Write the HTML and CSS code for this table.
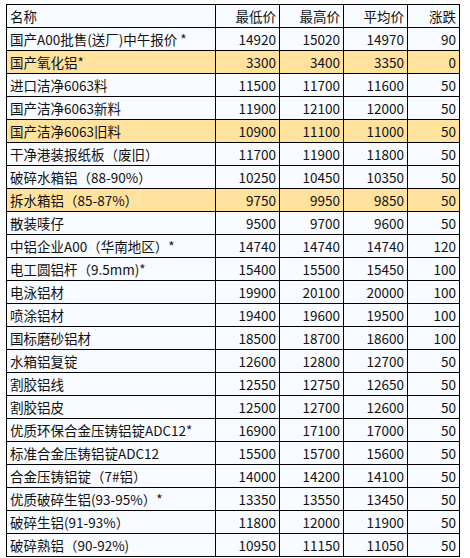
FILE: index.html
```html
<!DOCTYPE html>
<html lang="zh">
<head>
<meta charset="utf-8">
<link rel="stylesheet" href="styles.css">
</head>
<body>
<table class="price">
<colgroup><col class="c-name"><col class="c-num"><col class="c-num"><col class="c-num"><col class="c-chg"></colgroup>
<tr><td>名称</td><td class="n">最低价</td><td class="n">最高价</td><td class="n">平均价</td><td class="n">涨跌</td></tr>
<tr><td>国产A00批售(送厂)中午报价 *</td><td class="n">14920</td><td class="n">15020</td><td class="n">14970</td><td class="n">90</td></tr>
<tr class="hl"><td>国产氧化铝*</td><td class="n">3300</td><td class="n">3400</td><td class="n">3350</td><td class="n">0</td></tr>
<tr><td>进口洁净6063料</td><td class="n">11500</td><td class="n">11700</td><td class="n">11600</td><td class="n">50</td></tr>
<tr><td>国产洁净6063新料</td><td class="n">11900</td><td class="n">12100</td><td class="n">12000</td><td class="n">50</td></tr>
<tr class="hl"><td>国产洁净6063旧料</td><td class="n">10900</td><td class="n">11100</td><td class="n">11000</td><td class="n">50</td></tr>
<tr><td>干净港装报纸板（废旧）</td><td class="n">11700</td><td class="n">11900</td><td class="n">11800</td><td class="n">50</td></tr>
<tr><td>破碎水箱铝（88-90%）</td><td class="n">10250</td><td class="n">10450</td><td class="n">10350</td><td class="n">50</td></tr>
<tr class="hl"><td>拆水箱铝（85-87%）</td><td class="n">9750</td><td class="n">9950</td><td class="n">9850</td><td class="n">50</td></tr>
<tr><td>散装唛仔</td><td class="n">9500</td><td class="n">9700</td><td class="n">9600</td><td class="n">50</td></tr>
<tr><td>中铝企业A00（华南地区）*</td><td class="n">14740</td><td class="n">14740</td><td class="n">14740</td><td class="n">120</td></tr>
<tr><td>电工圆铝杆（9.5mm)*</td><td class="n">15400</td><td class="n">15500</td><td class="n">15450</td><td class="n">100</td></tr>
<tr><td>电泳铝材</td><td class="n">19900</td><td class="n">20100</td><td class="n">20000</td><td class="n">100</td></tr>
<tr><td>喷涂铝材</td><td class="n">19400</td><td class="n">19600</td><td class="n">19500</td><td class="n">100</td></tr>
<tr><td>国标磨砂铝材</td><td class="n">18500</td><td class="n">18700</td><td class="n">18600</td><td class="n">100</td></tr>
<tr><td>水箱铝复锭</td><td class="n">12600</td><td class="n">12800</td><td class="n">12700</td><td class="n">50</td></tr>
<tr><td>割胶铝线</td><td class="n">12550</td><td class="n">12750</td><td class="n">12650</td><td class="n">50</td></tr>
<tr><td>割胶铝皮</td><td class="n">12500</td><td class="n">12700</td><td class="n">12600</td><td class="n">50</td></tr>
<tr><td>优质环保合金压铸铝锭ADC12*</td><td class="n">16900</td><td class="n">17100</td><td class="n">17000</td><td class="n">50</td></tr>
<tr><td>标准合金压铸铝锭ADC12</td><td class="n">15500</td><td class="n">15700</td><td class="n">15600</td><td class="n">50</td></tr>
<tr><td>合金压铸铝锭（7#铝）</td><td class="n">14000</td><td class="n">14200</td><td class="n">14100</td><td class="n">50</td></tr>
<tr><td>优质破碎生铝(93-95%）*</td><td class="n">13350</td><td class="n">13550</td><td class="n">13450</td><td class="n">50</td></tr>
<tr><td>破碎生铝(91-93%）</td><td class="n">11800</td><td class="n">12000</td><td class="n">11900</td><td class="n">50</td></tr>
<tr><td>破碎熟铝（90-92%)</td><td class="n">10950</td><td class="n">11150</td><td class="n">11050</td><td class="n">50</td></tr>
</table>
</body>
</html>
```
FILE: styles.css
```css
html, body {
  margin: 0;
  padding: 0;
  background: #ffffff;
}
body {
  padding: 4px 0 0 6px;
  font-family: "Noto Sans CJK SC", sans-serif;
  font-size: 13.5px;
  color: #111111;
}
.price {
  border-collapse: collapse;
  table-layout: fixed;
  width: 453px;
}
.c-name { width: 209px; }
.c-num { width: 64px; }
.c-chg { width: 52px; }
.price td {
  border: 1px solid #000;
  height: 22px;
  padding: 0 2px 0 3px;
  line-height: 18px;
  vertical-align: middle;
  background: #f8fbff;
  white-space: nowrap;
  overflow: hidden;
  box-sizing: content-box;
}
.price tr.hl td {
  background: #ffe29e;
}
.price td.n {
  text-align: right;
  padding-right: 3px;
}
```
